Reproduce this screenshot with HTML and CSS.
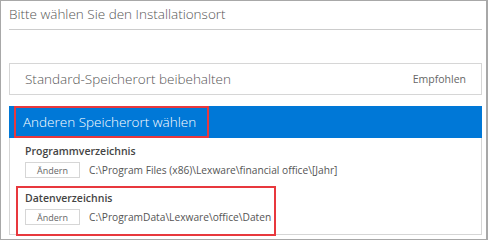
FILE: index.html
```html
<!DOCTYPE html>
<html lang="de">
<head>
    <meta charset="UTF-8">
    <title>Installationsort</title>
    <link rel="stylesheet" href="styles.css">
</head>
<body>
    <div class="frame">
        <div class="page-title">Bitte wählen Sie den Installationsort</div>

        <div class="option option-default">
            <span class="option-label">Standard-Speicherort beibehalten</span>
            <span class="option-hint">Empfohlen</span>
        </div>

        <div class="option-custom">
            <div class="option option-selected">
                <span class="option-label marked">Anderen Speicherort wählen</span>
            </div>
            <div class="folders">
                <div class="folder">
                    <div class="folder-name">Programmverzeichnis</div>
                    <div class="folder-row">
                        <button class="change-button">Ändern</button>
                        <span class="folder-path">C:\Program Files (x86)\Lexware\financial office\[Jahr]</span>
                    </div>
                </div>
                <div class="folder marked-box">
                    <div class="folder-name">Datenverzeichnis</div>
                    <div class="folder-row">
                        <button class="change-button">Ändern</button>
                        <span class="folder-path">C:\ProgramData\Lexware\office\Daten</span>
                    </div>
                </div>
            </div>
        </div>
    </div>
</body>
</html>
```

FILE: styles.css
```css
body {
    margin: 0;
    font-family: "Open Sans", "Noto Sans", sans-serif;
    background: white;
    color: #555;
}
.frame {
    width: 488px;
    height: 240px;
    box-sizing: border-box;
    border: 1px solid #a8a8a8;
    border-right-width: 2px;
    padding: 0 4px 0 8px;
}
.page-title {
    font-size: 13.5px;
    font-weight: 300;
    color: #555;
    height: 26px;
    padding-top: 2px;
    line-height: 22px;
    border-bottom: 1px solid #ccc;
}
.option {
    display: flex;
    align-items: center;
    justify-content: space-between;
    height: 30px;
    padding: 0 15px;
}
.option-default {
    margin-top: 33px;
    border: 1px solid #d6d6d6;
}
.option-label {
    font-size: 13.5px;
    font-weight: 300;
}
.option-hint {
    font-size: 10.5px;
    color: #666;
}
.option-custom {
    margin-top: 11px;
    border: 1px solid #d6d6d6;
    border-top: none;
    height: 129px;
    box-sizing: border-box;
}
.option-selected {
    background: #0078d7;
    color: white;
    height: 32px;
    margin: 0 -1px;
}
.marked {
    outline: 2px solid #e8383d;
    padding: 5px 11px 5px 7px;
    margin-left: -8px;
}
.folders {
    padding: 3px 0 0 8px;
}
.folder {
    box-sizing: border-box;
    width: 256px;
    height: 46px;
    padding: 3px 7px 0;
}
.marked-box {
    outline: 2px solid #e8383d;
    margin-top: 1px;
}
.folder-name {
    font-size: 10.5px;
    font-weight: 600;
    color: #444;
    line-height: 15px;
}
.folder-row {
    display: flex;
    align-items: center;
    gap: 9px;
    margin-top: 3px;
}
.change-button {
    flex-shrink: 0;
    width: 55px;
    height: 16px;
    padding: 0;
    border: 1px solid #d6d6d6;
    background: white;
    font-family: inherit;
    font-size: 9px;
    color: #666;
}
.folder-path {
    font-size: 10.2px;
    color: #555;
    white-space: nowrap;
}
```
